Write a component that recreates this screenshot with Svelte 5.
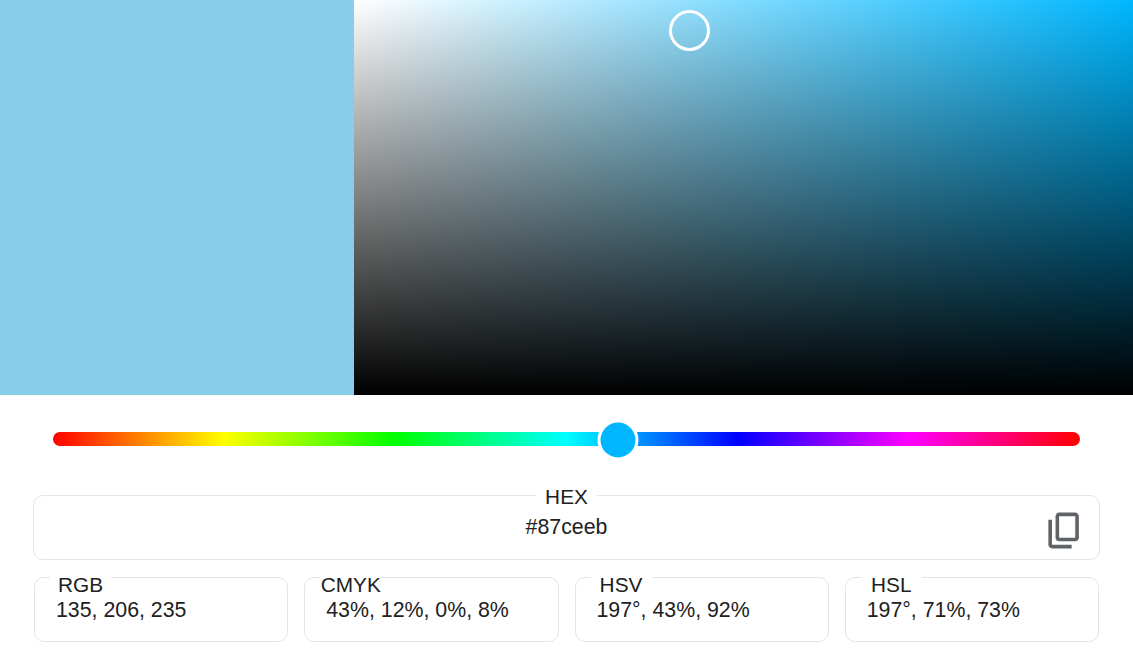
<script>
  const hue = 197;
  const hex = "#87ceeb";
  const formats = [
    { label: "RGB", value: "135, 206, 235" },
    { label: "CMYK", value: "43%, 12%, 0%, 8%" },
    { label: "HSV", value: "197°, 43%, 92%" },
    { label: "HSL", value: "197°, 71%, 73%" },
  ];
  const huePct = 55;
</script>

<main class="page">
  <section class="top">
    <div class="swatch"></div>
    <div class="picker">
      <span class="cursor"></span>
    </div>
  </section>

  <div class="slider">
    <div class="track">
      <span class="thumb" style="left: {huePct}%"></span>
    </div>
  </div>

  <fieldset class="field hex">
    <legend>HEX</legend>
    <div class="value">{hex}</div>
    <button class="copy" aria-label="copy">
      <svg viewBox="0 0 24 24" width="43" height="43">
        <path d="M9 18q-.825 0-1.413-.587Q7 16.825 7 16V4q0-.825.587-1.413Q8.175 2 9 2h9q.825 0 1.413.587Q20 3.175 20 4v12q0 .825-.587 1.413Q18.825 18 18 18Zm0-2h9V4H9v12Zm-4 6q-.825 0-1.413-.587Q3 20.825 3 20V6h2v14h11v2Z" />
      </svg>
    </button>
  </fieldset>

  <div class="formats">
    {#each formats as f}
      <fieldset class="field card">
        <legend>{f.label}</legend>
        <div class="value">{f.value}</div>
      </fieldset>
    {/each}
  </div>
</main>

<style>
  :global(body) {
    background: #fff;
  }

  .page {
    font-family: "Liberation Sans", Arial, sans-serif;
    font-size: 20.8px;
    color: #212121;
  }

  .top {
    display: flex;
    height: 395px;
  }
  .swatch {
    width: 354px;
    background: #87ceeb;
  }
  .picker {
    flex: 1;
    position: relative;
    background:
      linear-gradient(to top, #000, transparent),
      linear-gradient(to right, #fff, #00b7ff);
  }
  .cursor {
    position: absolute;
    left: 315px;
    top: 10px;
    width: 41px;
    height: 41px;
    box-sizing: border-box;
    border: 3px solid #fff;
    border-radius: 50%;
  }

  .slider {
    padding: 37px 53px 0;
  }
  .track {
    position: relative;
    height: 14px;
    border-radius: 7px;
    background: linear-gradient(to right, #f00, #ff0, #0f0, #0ff, #00f, #f0f, #f00);
  }
  .thumb {
    position: absolute;
    top: 7.5px;
    width: 35px;
    height: 35px;
    border: 3px solid #fff;
    border-radius: 50%;
    background: #00b7ff;
    transform: translate(-50%, -50%);
  }

  .field {
    position: relative;
    min-width: 0;
    margin: 0;
    box-sizing: border-box;
    border: 1px solid #e4e4e4;
    border-radius: 10px;
  }
  .field legend {
    width: 61px;
    box-sizing: border-box;
    text-align: center;
    white-space: nowrap;
  }
  .value {
    font-size: 21.33px;
  }

  .hex {
    margin: 35px 33px 0;
    padding: 6px 21px 0;
    height: 79px;
    text-align: center;
  }
  .hex legend {
    margin: 0 auto;
    padding: 4px 0 0;
  }

  .card {
    padding: 1px 21px 0;
    height: 85px;
  }
  .card legend {
    margin: 0 auto 0 -6px;
    padding: 16px 0 0;
  }

  .copy {
    position: absolute;
    right: 13px;
    top: 0;
    padding: 0;
    border: 0;
    background: none;
    line-height: 0;
  }
  .copy path {
    fill: #5f6368;
  }

  .formats {
    display: grid;
    grid-template-columns: repeat(4, 1fr);
    gap: 16px;
    margin: -3px 34px 0;
  }
</style>
